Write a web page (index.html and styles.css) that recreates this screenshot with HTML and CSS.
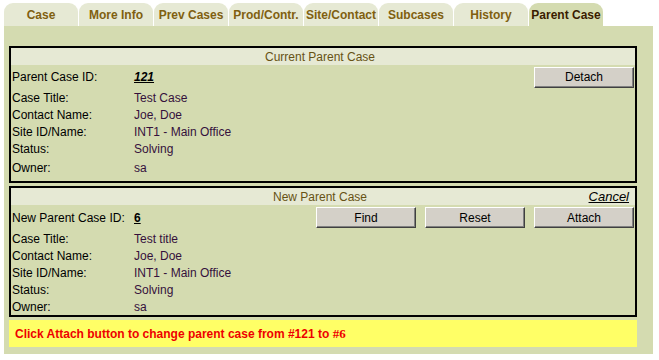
FILE: index.html
```html
<!DOCTYPE html>
<html lang="en">
  <head>
    <meta charset="UTF-8" />
    <meta name="viewport" content="width=device-width, initial-scale=1.0" />
    <title>Parent Case</title>
    <link rel="stylesheet" href="styles.css">
  </head>
  <body>
    <div class="page">
      <div class="tabs">
        <div class="tab">Case</div>
        <div class="tab">More Info</div>
        <div class="tab">Prev Cases</div>
        <div class="tab">Prod/Contr.</div>
        <div class="tab">Site/Contact</div>
        <div class="tab">Subcases</div>
        <div class="tab">History</div>
        <div class="tab active">Parent Case</div>
      </div>

      <div class="panel">
        <!-- Current parent -->
        <div class="box box-current">
          <div class="box-head">
            <span class="box-title">Current Parent Case</span>
          </div>
          <div class="row row-id">
            <span class="label">Parent Case ID:</span>
            <a class="case-link italic" href="#">121</a>
            <div class="actions">
              <button class="btn">Detach</button>
            </div>
          </div>
          <div class="row"><span class="label">Case Title:</span><span class="value">Test Case</span></div>
          <div class="row"><span class="label">Contact Name:</span><span class="value">Joe, Doe</span></div>
          <div class="row"><span class="label">Site ID/Name:</span><span class="value">INT1 - Main Office</span></div>
          <div class="row"><span class="label">Status:</span><span class="value">Solving</span></div>
          <div class="row row-last"><span class="label">Owner:</span><span class="value">sa</span></div>
        </div>

        <!-- New parent -->
        <div class="box box-new">
          <div class="box-head">
            <span class="box-title">New Parent Case</span>
            <a class="cancel" href="#">Cancel</a>
          </div>
          <div class="row row-id">
            <span class="label">New Parent Case ID:</span>
            <a class="case-link" href="#">6</a>
            <div class="actions">
              <button class="btn">Find</button>
              <button class="btn">Reset</button>
              <button class="btn">Attach</button>
            </div>
          </div>
          <div class="row"><span class="label">Case Title:</span><span class="value">Test title</span></div>
          <div class="row"><span class="label">Contact Name:</span><span class="value">Joe, Doe</span></div>
          <div class="row"><span class="label">Site ID/Name:</span><span class="value">INT1 - Main Office</span></div>
          <div class="row"><span class="label">Status:</span><span class="value">Solving</span></div>
          <div class="row"><span class="label">Owner:</span><span class="value">sa</span></div>
        </div>

        <div class="notice">Click Attach button to change parent case from #121 to <span class="notice-id">#6</span></div>
      </div>
    </div>
  </body>
</html>
```

FILE: styles.css
```css
* {
  margin: 0;
  padding: 0;
  box-sizing: border-box;
}

body {
  font-family: "Liberation Sans", Arial, sans-serif;
  font-size: 12px;
  color: #000;
  background: #fff;
}

.page {
  padding: 3px 0 0 4px;
  width: 653px;
}

/* Tab strip */
.tabs {
  display: flex;
  gap: 1px;
  height: 23px;
}

.tab {
  width: 74px;
  height: 23px;
  background: #e6e9d4;
  border-radius: 9px 9px 0 0;
  color: #806010;
  font-weight: bold;
  font-size: 12px;
  display: flex;
  justify-content: center;
  align-items: center;
  padding-top: 1px;
  white-space: nowrap;
}

.tab.active {
  background: #d4dbb0;
  color: #3a1c00;
}

/* Panel */
.panel {
  background: #d4dbb0;
  padding: 20px 0 7px 5px;
  width: 649px;
}

.box {
  width: 628px;
  border: 2px solid #000;
}

.box-new {
  margin-top: 3px;
}

.box-head {
  height: 17px;
  background: #e6e9d4;
  display: grid;
  grid-template-columns: 1fr auto 1fr;
  align-items: center;
  padding-right: 6px;
}

.box-title {
  grid-column: 2;
  color: #675214;
  font-size: 12px;
}

.cancel {
  grid-column: 3;
  justify-self: end;
  color: #000;
  font-style: italic;
  font-size: 13px;
}

.row {
  display: flex;
  align-items: center;
  height: 17px;
  padding-left: 1px;
}

.row-id {
  height: 24px;
}

.box-new .row-id {
  height: 25px;
}

.row-last {
  height: 24px;
  padding-bottom: 2px;
}

.label {
  width: 122px;
  flex-shrink: 0;
}

.value {
  color: #34103c;
}

.case-link {
  color: #000;
  font-weight: bold;
  text-decoration: underline;
}

.case-link.italic {
  font-style: italic;
}

.actions {
  margin-left: auto;
  display: flex;
  gap: 9px;
  padding-right: 1px;
}

.btn {
  width: 100px;
  height: 21px;
  background: #d4d0c8;
  font-family: "Liberation Sans", Arial, sans-serif;
  font-size: 12px;
  color: #000;
  border: 1px solid;
  border-color: #fff #404040 #404040 #fff;
  box-shadow: inset -1px -1px 0 #808080;
}

/* Message bar */
.notice {
  margin-top: 3px;
  width: 628px;
  height: 27px;
  line-height: 27px;
  background: #ffff66;
  color: #ee0000;
  font-weight: bold;
  font-size: 12px;
  padding-left: 6px;
}

.notice-id {
  font-family: "Liberation Serif", "Times New Roman", serif;
  font-size: 13px;
}
```
